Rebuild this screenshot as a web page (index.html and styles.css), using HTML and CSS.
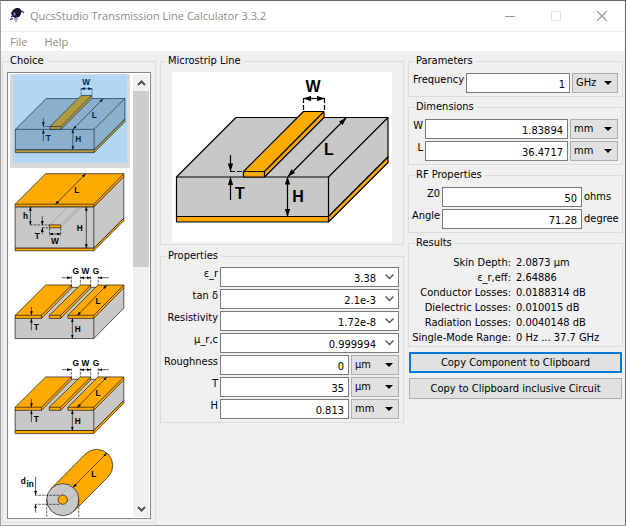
FILE: index.html
```html
<!DOCTYPE html>
<html lang="en">
<head>
<meta charset="utf-8">
<title>QucsStudio Transmission Line Calculator 3.3.2</title>
<link rel="stylesheet" href="styles.css">
</head>
<body>
<svg class="defs" width="0" height="0" aria-hidden="true">
  <defs>
    <marker id="tip" viewBox="0 0 9 6" refX="8.5" refY="3" markerWidth="8" markerHeight="5.5" markerUnits="userSpaceOnUse" orient="auto-start-reverse"><path d="M0 0L9 3L0 6Z"/></marker>
    <symbol id="microstrip" viewBox="0 0 220 170">
      <g class="line">
        <path class="sub" d="M4.500 105L64 45.500H216V85L156.500 144.500H4.500Z"/>
        <path class="metal" d="M4.500 144.500H156.500L216 85V90.500L156.500 150H4.500Z"/>
        <path d="M4.500 105H156.500L216 45.500M156.500 105V150"/>
        <path class="metal" d="M71.500 99.500L131.500 39.500H152V45.500L92.500 105H71.500Z"/>
        <path d="M71.500 99.500H92.500L152 39.500M92.500 99.500V105"/>
        <path class="dash" d="M131.500 26V39M152.500 26V39M58 99.500H71"/>
        <path class="both" d="M131.500 26.500H152.500"/>
        <path class="both" d="M116 104.500L174 46"/>
        <path class="both" d="M115.500 105V144.500"/>
        <path class="end" d="M58.500 83V99"/>
        <path class="end" d="M58.500 128V105.500"/>
      </g>
      <text x="141" y="19.500">W</text><text x="157" y="83">L</text><text x="126" y="130">H</text><text x="68" y="127">T</text>
    </symbol>
    <symbol id="stripline" viewBox="0 0 220 170">
      <g class="line">
        <path class="sub" d="M4 73H156L214 14V95L156 153H4Z"/>
        <path class="metal" d="M4 68L63 9H214V15L156 73H4Z"/>
        <path class="metal" d="M4 153H156L214 95V100L156 158H4Z"/>
        <path d="M4 68H156L214 9M156 68V158"/>
        <path class="faint" d="M70 108L104 75M92 108L126 75M92 113L131 75"/>
        <path class="metal" d="M70 108H92V113.500H70Z"/>
        <path class="dash" d="M33 108H70M56 113.500H70M70.500 114V129M92 114V129"/>
        <path class="both" d="M33.500 73V108"/>
        <path class="end" d="M56.500 91V108"/>
        <path class="end" d="M56.500 126V114"/>
        <path class="both" d="M70.500 125.500H92"/>
        <path class="both" d="M141.500 73V153"/>
        <path class="both" d="M82 68L140 9.500"/>
      </g>
      <text x="24" y="97">h</text><text x="47" y="135">T</text><text x="81" y="145">W</text><text x="129" y="120">H</text><text x="123" y="47">L</text>
    </symbol>
    <g id="coplanar-top">
      <g class="line">
        <path class="metal" d="M4 101L63 42.500H113V48L55 107H4Z"/>
        <path d="M4 101H55L113 42.500M55 101V107"/>
        <path class="metal" d="M70 101L130 42.500H150V48L92 107H70Z"/>
        <path d="M70 101H92L150 42.500M92 101V107"/>
        <path class="metal" d="M106 101L164 42.500H214V48L156 107H106Z"/>
        <path d="M106 101H156L214 42.500M156 101V107"/>
        <path class="dash" d="M112.500 26V42M130 26V42M150 26V42M164.500 26V42"/>
        <path class="end" d="M94 28.500H112"/>
        <path class="end" d="M185 28.500H165"/>
        <path class="both" d="M130 28.500H150"/>
        <path class="both" d="M124 101.500L181 43"/>
        <path class="both" d="M114.500 107V146"/>
        <path class="end" d="M35.500 85V101"/>
        <path class="end" d="M35.500 130V107.500"/>
      </g>
      <text x="121" y="22">G</text><text x="140" y="22">W</text><text x="160" y="22">G</text><text x="164" y="80">L</text><text x="125" y="133">H</text><text x="45" y="129">T</text>
    </g>
    <symbol id="coplanar" viewBox="0 0 220 170">
      <path class="line sub" d="M4 107L63 47H214V87L156 146H4Z"/>
      <path class="line" d="M156 107V146"/>
      <use href="#coplanar-top"/>
    </symbol>
    <symbol id="grounded" viewBox="0 4 220 170">
      <path class="line sub" d="M4 107L63 47H214V88L156 146H4Z"/>
      <path class="line metal" d="M4 146H156L214 88V93L156 152H4Z"/>
      <path class="line" d="M156 107V152"/>
      <use href="#coplanar-top"/>
    </symbol>
    <symbol id="coaxial" viewBox="0 0 220 170">
      <g class="line">
        <path class="metal" d="M74 72L139.500 6A31 31 0 0 1 183.500 50L118 116Z"/>
        <circle class="sub" cx="96" cy="94" r="31"/>
        <circle class="metal" cx="96" cy="94" r="9"/>
        <path class="faint dash" d="M89 88L116 62M102 101L128 75"/>
        <path class="dash" d="M42 85.500H90M42 103H90M65 94V127M127 94V127"/>
        <path class="both" d="M116 70L181 4"/>
        <path class="end" d="M43.500 50V85"/>
        <path class="end" d="M43.500 119V103.500"/>
      </g>
      <text x="156" y="50">L</text><text x="20" y="64">d</text><text x="33" y="69">in</text>
    </symbol>
    <symbol id="chevron" viewBox="0 0 9 6"><path d="M0.500 0.500L4.500 4.500L8.500 0.500" fill="none" stroke="#505050" stroke-width="1.300"/></symbol>
  </defs>
</svg>

<div class="window">
  <header class="titlebar">
    <svg class="logo" viewBox="0 0 17 16" aria-hidden="true">
      <path d="M4 2L7 0H10L12 2V6L10 9L6 10L3 8L2 5Z" fill="#12122a"/>
      <path d="M2 9L5 7M11 5L13 3L15 5M4 10L1 12" stroke="#35355c" stroke-width="1.200" fill="none"/>
      <path d="M4 5L6 4L7 7L5 8Z" fill="#6676b4"/>
      <path d="M5 11H9M6 13H8" stroke="#8497bd" stroke-width="1.400"/>
    </svg>
    <h1>QucsStudio Transmission Line Calculator 3.3.2</h1>
    <div class="controls">
      <button type="button" aria-label="Minimize"><svg viewBox="0 0 10 10"><path d="M0 5.500H10" stroke="#999"/></svg></button>
      <button type="button" aria-label="Maximize" disabled><svg viewBox="0 0 10 10"><path d="M.5 .5H9.500V9.500H.5Z" fill="none" stroke="#e6e6e6"/></svg></button>
      <button type="button" aria-label="Close"><svg viewBox="0 0 10 10"><path d="M0 0L10 10M10 0L0 10" stroke="#8c8c8c" stroke-width="1.100"/></svg></button>
    </div>
  </header>
  <nav class="menu"><button type="button">File</button><button type="button">Help</button></nav>

  <main class="panes">
    <fieldset class="group choice">
      <legend>Choice</legend>
      <div class="listbox">
        <div class="items">
          <button type="button" class="item selected" aria-label="Microstrip line"><svg><use href="#microstrip"/></svg></button>
          <button type="button" class="item" aria-label="Stripline"><svg><use href="#stripline"/></svg></button>
          <button type="button" class="item" aria-label="Coplanar line"><svg><use href="#coplanar"/></svg></button>
          <button type="button" class="item" aria-label="Grounded coplanar line"><svg><use href="#grounded"/></svg></button>
          <button type="button" class="item" aria-label="Coaxial line"><svg><use href="#coaxial"/></svg></button>
        </div>
        <div class="scrollbar">
          <button type="button" aria-label="Scroll up"><svg class="up" viewBox="0 0 9 6"><path d="M1 1L4.500 4.500L8 1" fill="none" stroke="#505050" stroke-width="2"/></svg></button>
          <div class="track"><div class="thumb"></div></div>
          <button type="button" aria-label="Scroll down"><svg viewBox="0 0 9 6"><path d="M1 1L4.500 4.500L8 1" fill="none" stroke="#505050" stroke-width="2"/></svg></button>
        </div>
      </div>
    </fieldset>

    <div class="column">
      <fieldset class="group">
        <legend>Microstrip Line</legend>
        <svg class="preview" viewBox="0 0 220 170" role="img" aria-label="Microstrip line"><use href="#microstrip"/></svg>
      </fieldset>
      <fieldset class="group">
        <legend>Properties</legend>
        <div class="fields properties">
          <label for="er">ε_r</label><div class="combo"><input id="er" value="3.38"><svg><use href="#chevron"/></svg></div>
          <label for="tand">tan δ</label><div class="combo"><input id="tand" value="2.1e-3"><svg><use href="#chevron"/></svg></div>
          <label for="res">Resistivity</label><div class="combo"><input id="res" value="1.72e-8"><svg><use href="#chevron"/></svg></div>
          <label for="mur">μ_r,c</label><div class="combo"><input id="mur" value="0.999994"><svg><use href="#chevron"/></svg></div>
          <label for="rough">Roughness</label><input id="rough" value="0"><span class="unit"><select aria-label="Roughness unit"><option>µm</option></select></span>
          <label for="t">T</label><input id="t" value="35"><span class="unit"><select aria-label="T unit"><option>µm</option></select></span>
          <label for="h">H</label><input id="h" value="0.813"><span class="unit"><select aria-label="H unit"><option>mm</option></select></span>
        </div>
      </fieldset>
    </div>

    <div class="column side">
      <fieldset class="group">
        <legend>Parameters</legend>
        <div class="fields frequency">
          <label for="freq">Frequency</label><input id="freq" value="1"><span class="unit"><select aria-label="Frequency unit"><option>GHz</option></select></span>
        </div>
      </fieldset>
      <fieldset class="group">
        <legend>Dimensions</legend>
        <div class="fields dimensions">
          <label for="w">W</label><input id="w" value="1.83894"><span class="unit"><select aria-label="W unit"><option>mm</option></select></span>
          <label for="l">L</label><input id="l" value="36.4717"><span class="unit"><select aria-label="L unit"><option>mm</option></select></span>
        </div>
      </fieldset>
      <fieldset class="group">
        <legend>RF Properties</legend>
        <div class="fields rf">
          <label for="z0">Z0</label><input id="z0" value="50"><span class="suffix">ohms</span>
          <label for="angle">Angle</label><input id="angle" value="71.28"><span class="suffix">degree</span>
        </div>
      </fieldset>
      <fieldset class="group results">
        <legend>Results</legend>
        <dl>
          <dt>Skin Depth:</dt><dd>2.0873 µm</dd>
          <dt>ε_r,eff:</dt><dd>2.64886</dd>
          <dt>Conductor Losses:</dt><dd>0.0188314 dB</dd>
          <dt>Dielectric Losses:</dt><dd>0.010015 dB</dd>
          <dt>Radiation Losses:</dt><dd>0.0040148 dB</dd>
          <dt>Single-Mode Range:</dt><dd>0 Hz ... 37.7 GHz</dd>
        </dl>
      </fieldset>
      <div class="actions">
        <button type="button" class="default">Copy Component to Clipboard</button>
        <button type="button">Copy to Clipboard inclusive Circuit</button>
      </div>
    </div>
  </main>
</div>
</body>
</html>
```
FILE: styles.css
```css
* { box-sizing: border-box; }
body {
  margin: 0;
  font: 11px/14px "DejaVu Sans Condensed", "DejaVu Sans", sans-serif;
  font-stretch: condensed;
  color: #000;
}
button, input, select { font: inherit; color: inherit; margin: 0; border-radius: 0; }
.defs { position: absolute; }

.window {
  height: 100vh;
  display: flex;
  flex-direction: column;
  background: #f0f0f0;
  border: 1px solid #a0a0a0;
  border-top-color: #666;
  border-right-color: #4f6c8c;
}

/* Title bar and menu */
.titlebar {
  display: flex;
  align-items: center;
  height: 31px;
  flex: none;
  padding-left: 8px;
  background: #fff;
  border-bottom: 1px solid #eee;
}
.logo { width: 17px; height: 16px; margin-right: 4px; }
h1 { flex: 1; margin: 0; font: 11px/16px "Open Sans", sans-serif; color: #8c8c8c; white-space: nowrap; }
.controls { display: flex; }
.controls button { width: 46px; height: 28px; padding: 0; border: 0; background: none; }
.controls svg { width: 10px; height: 10px; display: block; margin: auto; }
.menu { display: flex; flex: none; height: 19px; background: #fff; padding-left: 9px; gap: 17px; }
.menu button { border: 0; padding: 0; background: none; font: 11px/18px "Open Sans", sans-serif; color: #8c8c8c; }

/* Panes */
.panes {
  flex: 1;
  min-height: 0;
  display: grid;
  grid-template-columns: 154px minmax(0, 1fr) 215px;
  grid-template-rows: minmax(0, 1fr);
  column-gap: 4px;
  padding: 3px 2px 2px 1px;
}
.column { display: flex; flex-direction: column; gap: 4px; }
.side { gap: 3px; }
.group { min-width: 0; margin: 0; padding: 4px 4px 3px 3px; border: 1px solid #dcdcdc; }
.side .group { padding-top: 5px; }
legend { margin-left: 3px; padding: 0 3px 0 1px; line-height: 14px; }

.choice { display: flex; flex-direction: column; min-height: 0; }
.listbox { flex: 1; min-height: 0; display: flex; border: 1px solid #828790; background: #fff; padding: 1px; overflow: hidden; margin-left: 1px; }
.items { flex: 1; min-width: 0; overflow: hidden; }
.item { display: flex; align-items: flex-start; width: 120px; height: 94px; margin: 0 0 0 1px; padding: 1px 3px 0; border: 0; background: none; }
.item svg { display: block; width: 114px; height: 88px; overflow: visible; }
symbol { overflow: visible; }
.item.selected { position: relative; background: #d9d9d9; }
.item.selected svg { background: #fff; }
.item.selected::after { content: ""; position: absolute; inset: 1px 3px 5px; background: #0078d74d; }
.scrollbar { width: 16px; flex: none; display: flex; flex-direction: column; background: #f0f0f0; }
.scrollbar button { height: 17px; padding: 0; border: 0; background: none; }
.scrollbar svg { display: block; width: 9px; height: 6px; margin: auto; }
.scrollbar .up { transform: rotate(180deg); }
.track { flex: 1; }
.thumb { height: 43%; background: #cdcdcd; }

/* Line drawings */
.line { fill: none; stroke: #000; stroke-width: 1.2; stroke-linejoin: round; }
.sub { fill: #c8c8c8; }
.metal { fill: #fa0; }
.dash { stroke-dasharray: 5 2; }
.faint { stroke: #888; stroke-width: 1; }
.both { marker-start: url(#tip); marker-end: url(#tip); }
.end { marker-end: url(#tip); }
symbol text, #coplanar-top text { font: bold 16px "Liberation Sans", sans-serif; text-anchor: middle; }
.preview { display: block; width: 220px; max-width: 100%; margin-left: 8px; background: #fff; margin-bottom: -1px; }

/* Form rows */
.fields { display: grid; gap: 2px; }
.fields label { text-align: right; }
.properties { grid-template-columns: 54px minmax(0, 1fr) 48px; }
.frequency { grid-template-columns: 52px minmax(0, 1fr) 46px; }
.dimensions { grid-template-columns: 11px minmax(0, 1fr) 48px; }
.rf { grid-template-columns: 28px minmax(0, 1fr) 34px; }
input {
  width: 100%;
  min-width: 0;
  height: 20px;
  padding: 2px 4px 0;
  border: 1px solid #7a7a7a;
  background: #fff;
  text-align: right;
  outline: 0;
}
.combo { grid-column: 2 / 4; display: flex; align-items: center; height: 20px; border: 1px solid #7a7a7a; background: #fff; padding-right: 4px; }
.combo input { height: 18px; border: 0; padding-right: 9px; }
.combo svg { width: 9px; height: 6px; flex: none; }
.unit { position: relative; }
.unit::after {
  content: "";
  position: absolute;
  right: 6px;
  top: 8px;
  border: 4px solid transparent;
  border-top-color: #000;
  border-bottom: 0;
  pointer-events: none;
}
select { appearance: none; display: block; width: 100%; height: 20px; padding: 0 3px; border: 1px solid #adadad; background: #e1e1e1; }
.suffix { line-height: 20px; }

.results { padding-bottom: 1px; }
dl { display: grid; grid-template-columns: 99px 1fr; column-gap: 5px; margin: 0; line-height: 15px; white-space: nowrap; }
dt { display: flex; justify-content: flex-end; }
dd { margin: 0; }

.actions { display: flex; flex-direction: column; gap: 5px; padding: 2px 1px 0; }
.actions button { height: 21px; padding: 0; border: 1px solid #adadad; background: #e1e1e1; }
.actions .default { border: 2px solid #0078d7; }
```
